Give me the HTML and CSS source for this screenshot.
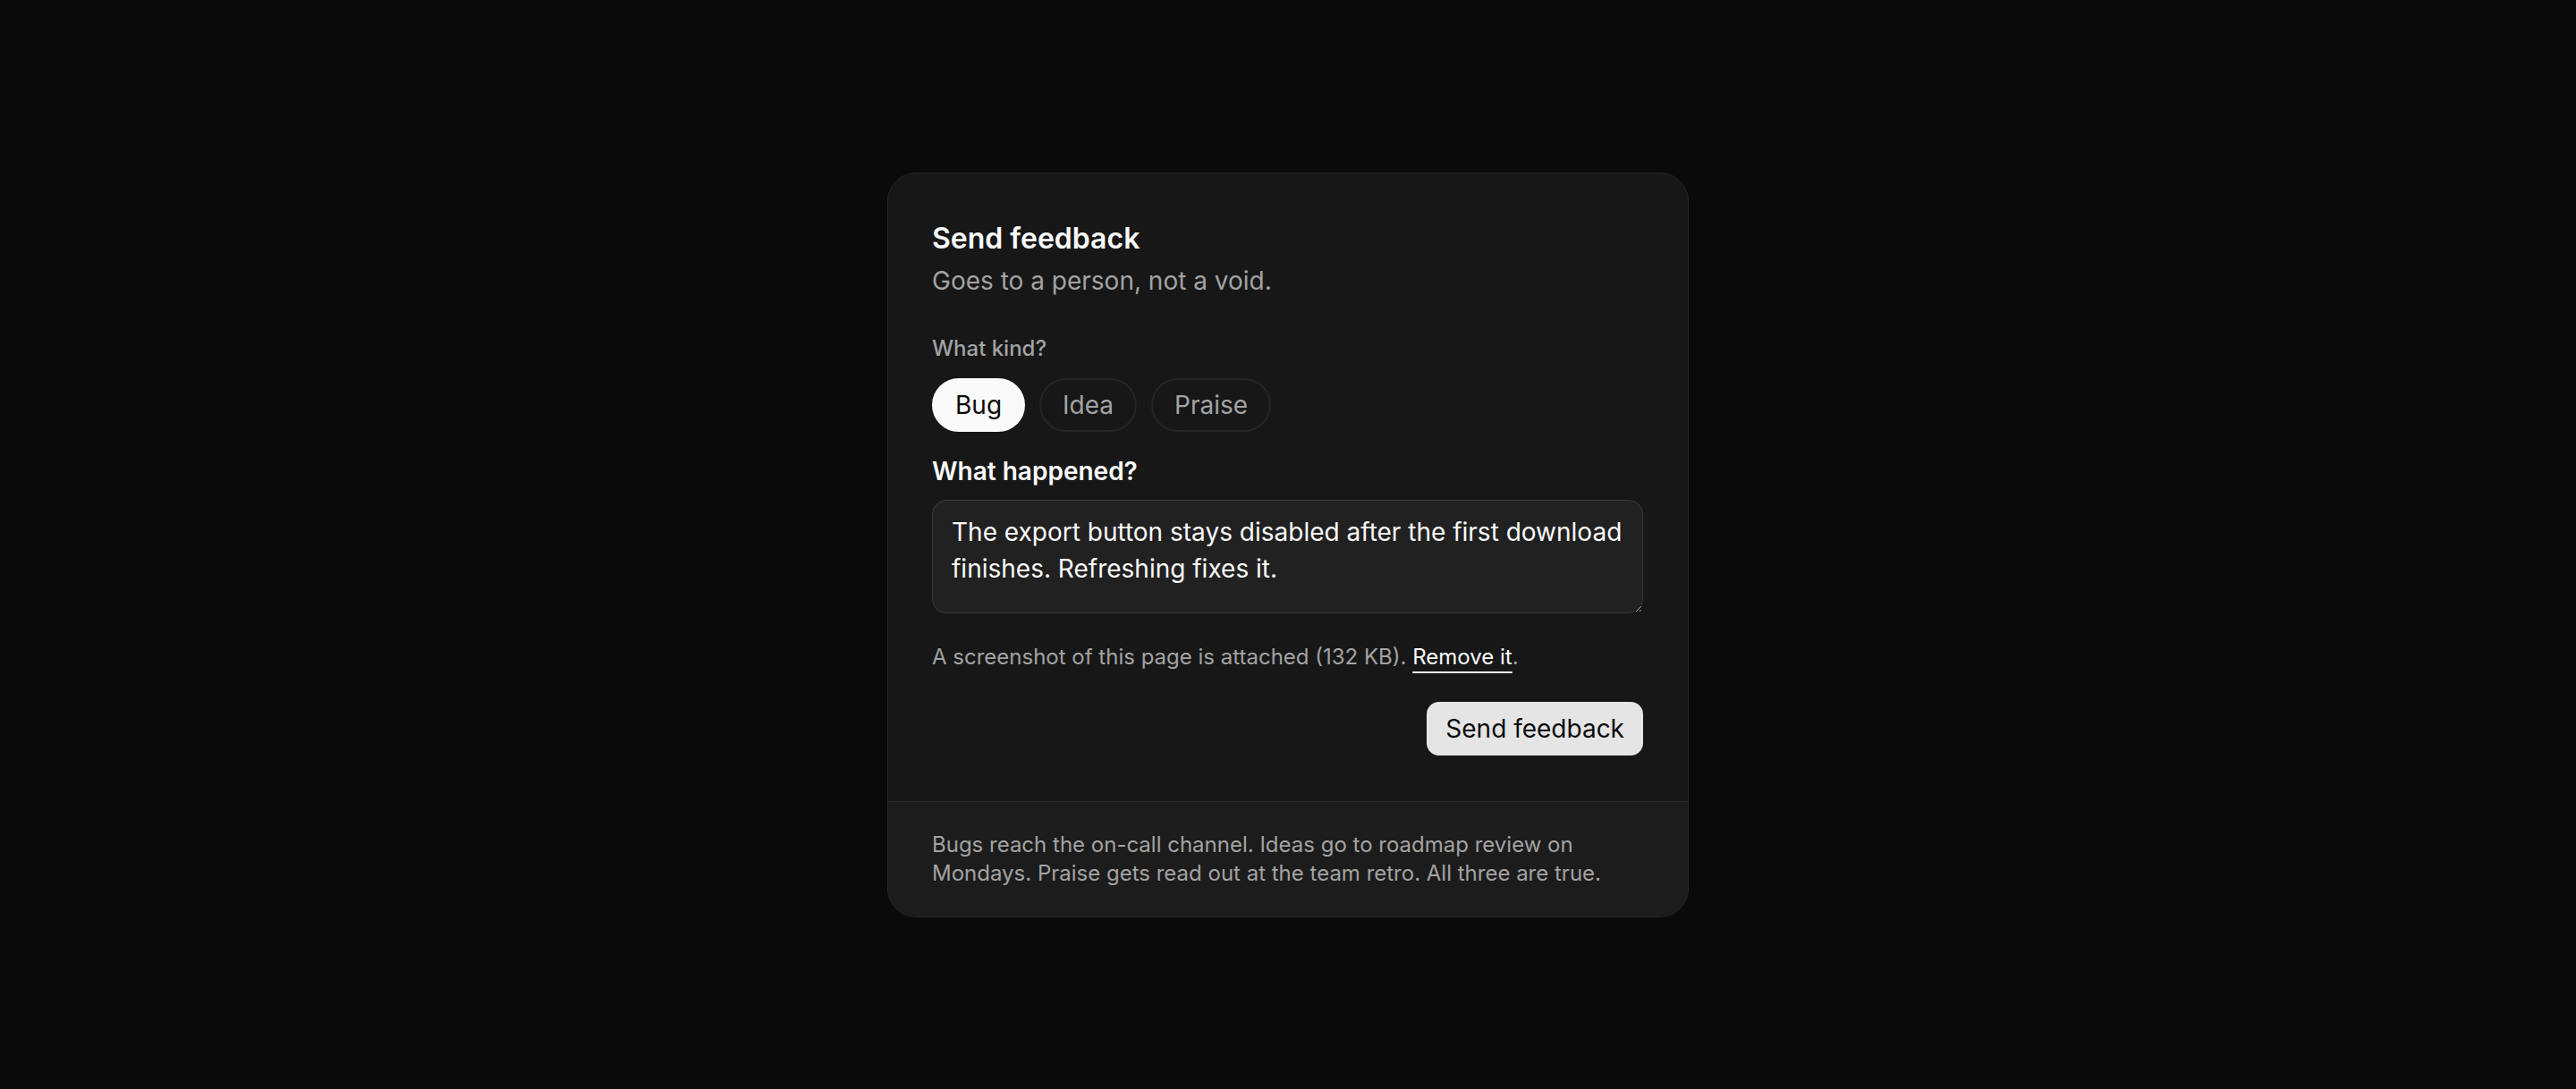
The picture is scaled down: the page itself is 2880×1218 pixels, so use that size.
FILE: index.html
```html
<!DOCTYPE html>
<html lang="en">
<head>
    <meta charset="UTF-8">
    <meta name="viewport" content="width=device-width, initial-scale=1.0">
    <title>Send feedback</title>
    <link rel="stylesheet" href="styles.css">
</head>
<body>
    <div class="feedback-card">
        <!-- form -->
        <div class="feedback-body">
            <h1 class="feedback-title">Send feedback</h1>
            <p class="feedback-subtitle">Goes to a person, not a void.</p>

            <div class="kind-label">What kind?</div>
            <div class="kind-options">
                <button class="kind-chip active">Bug</button>
                <button class="kind-chip">Idea</button>
                <button class="kind-chip">Praise</button>
            </div>

            <label class="field-label" for="details">What happened?</label>
            <textarea class="field-input" id="details">The export button stays disabled after the first download finishes. Refreshing fixes it.</textarea>

            <p class="attach-note">A screenshot of this page is attached (132 KB). <a href="#" class="attach-remove">Remove it</a>.</p>

            <div class="form-actions">
                <button class="submit-btn">Send feedback</button>
            </div>
        </div>

        <!-- footer note -->
        <div class="feedback-footer">
            Bugs reach the on-call channel. Ideas go to roadmap review on Mondays. Praise gets read out at the team retro. All three are true.
        </div>
    </div>
</body>
</html>
```

FILE: styles.css
```css
* {
    margin: 0;
    padding: 0;
    box-sizing: border-box;
}

body {
    min-height: 100vh;
    display: flex;
    align-items: center;
    justify-content: center;
    font-family: Inter, "Noto Sans", sans-serif;
    background: #0a0a0a;
    color: #fafafa;
}

.feedback-card {
    width: 896px;
    background: #171717;
    border: 1px solid #262626;
    border-radius: 32px;
    overflow: hidden;
}

.feedback-body {
    padding: 49px 50px 51px 49px;
}

.feedback-title {
    font-size: 32px;
    line-height: 48px;
    font-weight: 600;
    color: #fafafa;
}

.feedback-subtitle {
    margin-top: 3px;
    font-size: 28px;
    line-height: 40px;
    color: #a3a3a3;
}

.kind-label {
    margin-top: 40px;
    font-size: 24px;
    line-height: 32px;
    font-weight: 500;
    color: #a3a3a3;
}

.kind-options {
    display: flex;
    gap: 16px;
    margin-top: 17px;
}

.kind-chip {
    font-family: inherit;
    font-size: 28px;
    line-height: 40px;
    padding: 8px 24px;
    border: 2px solid #262626;
    border-radius: 999px;
    background: none;
    color: #a3a3a3;
    cursor: pointer;
}

.kind-chip.active {
    background: #fafafa;
    border-color: #fafafa;
    color: #0a0a0a;
}

.field-label {
    display: block;
    margin-top: 24px;
    font-size: 28px;
    line-height: 40px;
    font-weight: 600;
    color: #fafafa;
}

.field-input {
    display: block;
    width: 100%;
    height: 127px;
    margin-top: 12px;
    padding: 15px 21px;
    font-family: inherit;
    font-size: 28px;
    line-height: 41px;
    color: #fafafa;
    background: #212121;
    border: 1px solid #3a3a3a;
    border-radius: 16px;
    outline: none;
    resize: vertical;
}

.attach-note {
    margin-top: 31px;
    font-size: 24px;
    line-height: 36px;
    color: #a3a3a3;
}

.attach-remove {
    color: #fafafa;
    text-decoration: underline;
    text-decoration-thickness: 2px;
    text-underline-offset: 8px;
}

.form-actions {
    display: flex;
    justify-content: flex-end;
    margin-top: 32px;
}

.submit-btn {
    font-family: inherit;
    font-size: 28px;
    line-height: 40px;
    padding: 10px 21px;
    border: none;
    border-radius: 14px;
    background: #e5e5e5;
    color: #0a0a0a;
    cursor: pointer;
}

.feedback-footer {
    padding: 32px 49px;
    background: #1c1c1c;
    border-top: 1px solid #2a2a2a;
    font-size: 24px;
    line-height: 32px;
    color: #a3a3a3;
}
```
